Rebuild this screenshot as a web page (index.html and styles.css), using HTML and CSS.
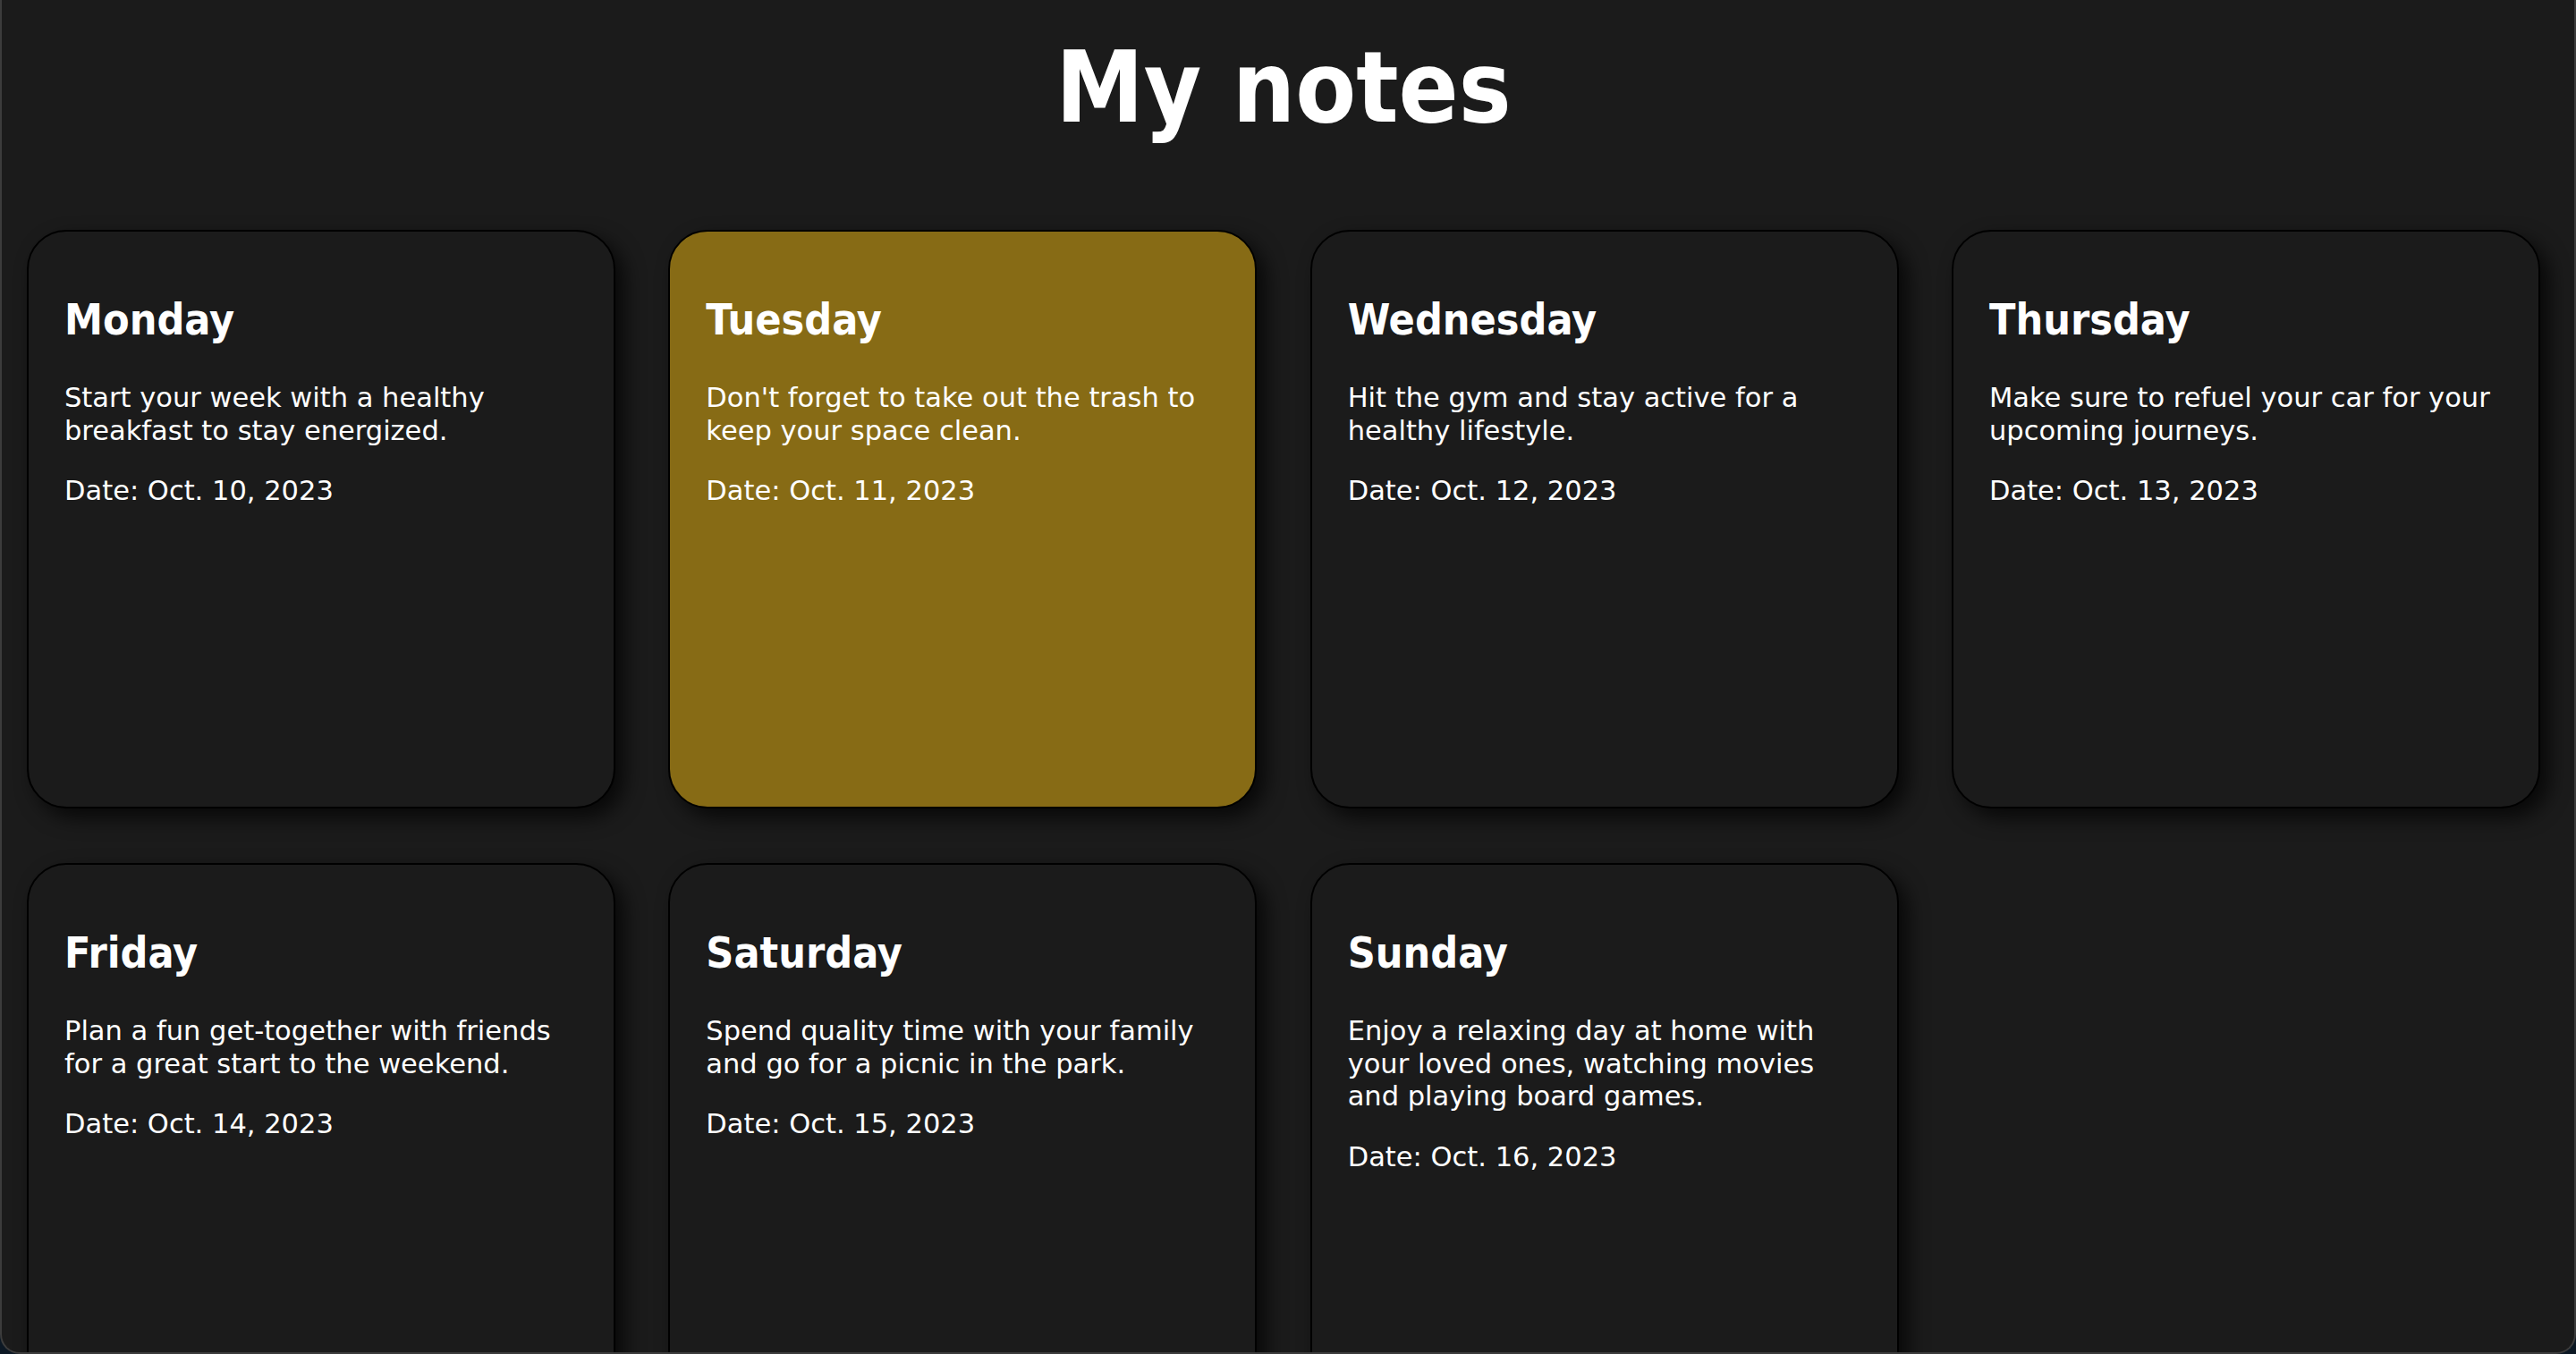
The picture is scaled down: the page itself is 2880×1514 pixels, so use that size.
FILE: index.html
```html
<!DOCTYPE html>
<html lang="en">
<head>
<meta charset="utf-8">
<title>My notes</title>
<link rel="stylesheet" href="styles.css">
</head>
<body>
<div class="window">
  <h1 class="page-title">My notes</h1>
  <div class="notes">
    <div class="note">
      <h2 class="note-title">Monday</h2>
      <p class="note-text">Start your week with a healthy breakfast to stay energized.</p>
      <p class="note-date">Date: Oct. 10, 2023</p>
    </div>
    <div class="note note-active">
      <h2 class="note-title">Tuesday</h2>
      <p class="note-text">Don't forget to take out the trash to keep your space clean.</p>
      <p class="note-date">Date: Oct. 11, 2023</p>
    </div>
    <div class="note">
      <h2 class="note-title">Wednesday</h2>
      <p class="note-text">Hit the gym and stay active for a healthy lifestyle.</p>
      <p class="note-date">Date: Oct. 12, 2023</p>
    </div>
    <div class="note">
      <h2 class="note-title">Thursday</h2>
      <p class="note-text">Make sure to refuel your car for your upcoming journeys.</p>
      <p class="note-date">Date: Oct. 13, 2023</p>
    </div>
    <div class="note">
      <h2 class="note-title">Friday</h2>
      <p class="note-text">Plan a fun get-together with friends for a great start to the weekend.</p>
      <p class="note-date">Date: Oct. 14, 2023</p>
    </div>
    <div class="note">
      <h2 class="note-title">Saturday</h2>
      <p class="note-text">Spend quality time with your family and go for a picnic in the park.</p>
      <p class="note-date">Date: Oct. 15, 2023</p>
    </div>
    <div class="note">
      <h2 class="note-title">Sunday</h2>
      <p class="note-text">Enjoy a relaxing day at home with your loved ones, watching movies and playing board games.</p>
      <p class="note-date">Date: Oct. 16, 2023</p>
    </div>
  </div>
</div>
</body>
</html>
```

FILE: styles.css
```css
html {
  background: #0c1824;
}

body {
  margin: 0;
  font-family: "DejaVu Sans", "Liberation Sans", sans-serif;
  color: #ffffff;
}

.window {
  box-sizing: border-box;
  height: 1514px;
  overflow: hidden;
  background: #1b1b1b;
  border: 2px solid #3c3c3c;
  border-top: none;
  border-radius: 0 0 22px 22px;
  padding: 42px 38px 0 28px;
}

.page-title {
  margin: 0;
  text-align: center;
  font-family: "DejaVu Sans Condensed", "DejaVu Sans", sans-serif;
  font-stretch: condensed;
  font-size: 110px;
  line-height: 113px;
  font-weight: bold;
}

.notes {
  display: grid;
  grid-template-columns: repeat(4, 1fr);
  column-gap: 59.3px;
  row-gap: 61px;
  margin-top: 102px;
}

.note {
  box-sizing: border-box;
  height: 647px;
  padding: 40px;
  border: 2px solid #000000;
  border-radius: 44px;
  background: #1b1b1b;
  box-shadow: 10px 10px 22px rgba(0, 0, 0, 0.7);
}

.note-active {
  background: #876b15;
}

.note-title {
  margin: 30px 0 0;
  font-family: "DejaVu Sans Condensed", "DejaVu Sans", sans-serif;
  font-stretch: condensed;
  font-size: 48px;
  line-height: 56px;
  font-weight: bold;
}

.note-text {
  margin: 42px 0 0;
  font-size: 30.5px;
  line-height: 36.7px;
}

.note-date {
  margin: 30.5px 0 0;
  font-size: 30.5px;
  line-height: 36.7px;
}
```
